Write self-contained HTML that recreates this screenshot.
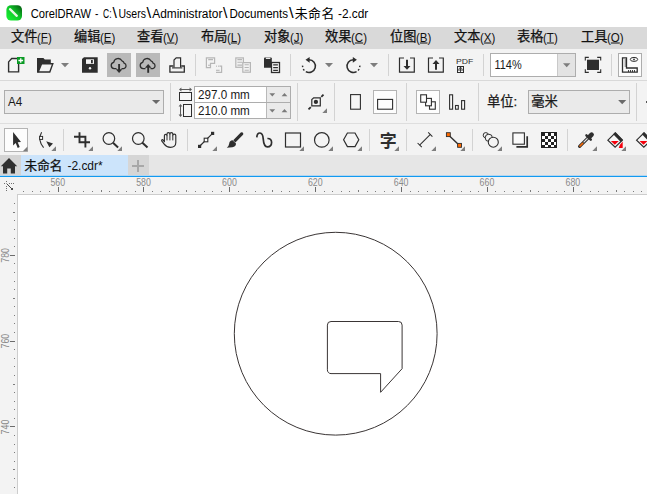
<!DOCTYPE html>
<html><head><meta charset="utf-8"><title>CorelDRAW</title>
<style>
html,body{margin:0;padding:0;}
body{width:647px;height:494px;overflow:hidden;position:relative;background:#fff;font-family:"Liberation Sans","Noto Sans CJK SC",sans-serif;color:#111;}
.abs{position:absolute;}
#title{left:0;top:0;width:647px;height:27px;background:#fff;}
#menu{left:0;top:27px;width:647px;height:22px;background:#d9d9d9;}
#menu span{-webkit-text-stroke:0.25px #111;position:absolute;top:-1px;font-size:13.2px;white-space:nowrap;color:#111;}
#menu span u{font-size:12px;text-decoration:none;display:inline-block;transform:translateY(0.5px) scaleX(0.96);transform-origin:left center;-webkit-text-stroke:0;}
#menu span u b{font-weight:normal;text-decoration:underline;}
#tb1{left:0;top:49px;width:647px;height:31px;background:#f3f3f3;}
#sep1{left:0;top:80px;width:647px;height:1px;background:#d9d9d9;}
#tb2{left:0;top:81px;width:647px;height:43px;background:#f3f3f3;}
#tb3{left:0;top:124px;width:647px;height:31px;background:#f3f3f3;}
#tabs{left:0;top:155px;width:647px;height:21px;background:#e6e6e6;}
#hr{left:0;top:177px;width:647px;height:17px;background:#f3f3f3;}
#vr{left:0;top:194px;width:17px;height:300px;background:#f3f3f3;}
#canvas{left:17px;top:194px;width:630px;height:300px;background:#fff;border-left:1px solid #cdcdcd;border-top:1px solid #cdcdcd;box-sizing:border-box;}
.rl{position:absolute;font-size:9.5px;color:#7d7d7d;}
svg{position:absolute;left:0;top:0;overflow:visible;}
</style></head><body>

<div id="title" class="abs"></div>
<svg width="647" height="494" viewBox="0 0 647 494"><defs><linearGradient id="lg" x1="0" y1="1" x2="1" y2="0"><stop offset="0" stop-color="#1af634"/><stop offset="0.5" stop-color="#0ecb29"/><stop offset="1" stop-color="#05500f"/></linearGradient></defs>
<rect x="6.4" y="5.2" width="15.6" height="15.4" rx="4.6" ry="4.6" fill="url(#lg)"/>
<path d="M10 9.2 L16.8 15.8" stroke="#e6f6e2" stroke-width="2.3" stroke-linecap="round"/>
<text y="17.8" font-size="12.5" fill="#000" font-family="Liberation Sans, Noto Sans CJK SC, sans-serif"><tspan x="30.8" textLength="60.3" lengthAdjust="spacingAndGlyphs">CorelDRAW</tspan> <tspan x="94.9" textLength="3.4" lengthAdjust="spacingAndGlyphs">-</tspan> <tspan x="103" textLength="8.5" lengthAdjust="spacingAndGlyphs">C:</tspan><tspan x="112.4" font-size="14" textLength="4.4" lengthAdjust="spacingAndGlyphs">\</tspan><tspan x="118.5" textLength="27.4" lengthAdjust="spacingAndGlyphs">Users</tspan><tspan x="146.5" font-size="14" textLength="4.7" lengthAdjust="spacingAndGlyphs">\</tspan><tspan x="152.2" textLength="70.2" lengthAdjust="spacingAndGlyphs">Administrator</tspan><tspan x="223" font-size="14" textLength="4.4" lengthAdjust="spacingAndGlyphs">\</tspan><tspan x="229.4" textLength="58.7" lengthAdjust="spacingAndGlyphs">Documents</tspan><tspan x="289" font-size="14" textLength="4.6000000000000005" lengthAdjust="spacingAndGlyphs">\</tspan><tspan x="294.7" y="17.5" font-size="12.9" letter-spacing="0.5">未命名</tspan> <tspan x="338" y="17.8" textLength="30.3" lengthAdjust="spacingAndGlyphs">-2.cdr</tspan></text></svg>
<div id="menu" class="abs">
<span style="left:11px">文件<u>(<b>F</b>)</u></span>
<span style="left:74px">编辑<u>(<b>E</b>)</u></span>
<span style="left:137px">查看<u>(<b>V</b>)</u></span>
<span style="left:201px">布局<u>(<b>L</b>)</u></span>
<span style="left:264px">对象<u>(<b>J</b>)</u></span>
<span style="left:325px">效果<u>(<b>C</b>)</u></span>
<span style="left:390px">位图<u>(<b>B</b>)</u></span>
<span style="left:454px">文本<u>(<b>X</b>)</u></span>
<span style="left:517px">表格<u>(<b>T</b>)</u></span>
<span style="left:581px">工具<u>(<b>O</b>)</u></span>
</div>
<div id="tb1" class="abs"></div><div id="sep1" class="abs"></div><div id="tb2" class="abs"></div><div id="tb3" class="abs"></div>
<div id="tabs" class="abs"></div><div id="hr" class="abs"></div><div id="vr" class="abs"></div><div id="canvas" class="abs"></div>
<svg width="647" height="494" viewBox="0 0 647 494"><rect x="195" y="54" width="1" height="22" fill="#d3d3d3"/>
<rect x="290" y="54" width="1" height="22" fill="#d3d3d3"/>
<rect x="388" y="54" width="1" height="22" fill="#d3d3d3"/>
<rect x="483" y="54" width="1" height="22" fill="#d3d3d3"/>
<rect x="611" y="54" width="1" height="22" fill="#d3d3d3"/>
<path d="M11.7 58.5 H18.6 V71.9 H8.6 V61.9 Z" fill="#f6f6f6" stroke="#2e2e2e" stroke-width="1.4" stroke-linejoin="miter"/>
<rect x="17" y="57" width="7.5" height="7" fill="#0a9a24"/>
<path d="M20.75 58.2 V62.8 M18.4 60.5 H23.1" stroke="#fff" stroke-width="1.3" fill="none"/>
<path d="M37 72.4 V58 H43.4 L44.8 59.6 H50.8 V63.6 H41.5 L38.5 72.4 Z" fill="#2e2e2e"/>
<path d="M38.2 72 L41.6 63.7 H52.8 L49.8 72 Z" fill="#f2f2f2" stroke="#2e2e2e" stroke-width="1.4" stroke-linejoin="miter"/>
<path d="M61 63 H69 L65 67.3 Z" fill="#7d7d7d"/>
<path d="M325 63 H333 L329 67.3 Z" fill="#7d7d7d"/>
<path d="M370 63 H378 L374 67.3 Z" fill="#7d7d7d"/>
<path d="M82 59 L84 57.3 H97.7 V72.7 H82 Z" fill="#2e2e2e"/>
<rect x="86" y="59.3" width="8" height="4.6" fill="#f4f4f4"/>
<rect x="91" y="60" width="1.8" height="3.2" fill="#2e2e2e"/>
<circle cx="90" cy="68.3" r="1.2" fill="#f4f4f4"/>
<rect x="107" y="53" width="24" height="24" fill="#b9b9b9"/>
<rect x="136" y="53" width="24" height="24" fill="#b9b9b9"/>
<path d="M116.5 68.6 H114.1 A3.2 3.2 0 0 1 113.7 62.3 A4.4 4.4 0 0 1 121.9 60.8 A3.1 3.1 0 0 1 124.1 63.2 A2.8 2.8 0 0 1 123.9 68.6 H121.5" fill="none" stroke="#2e2e2e" stroke-width="1.3"/>
<path d="M119.1 64 V70" stroke="#2e2e2e" stroke-width="1.9" fill="none"/><path d="M115.8 69.3 H122.4 L119.1 72.9 Z" fill="#2e2e2e"/>
<path d="M145.5 68.6 H143.1 A3.2 3.2 0 0 1 142.7 62.3 A4.4 4.4 0 0 1 150.9 60.8 A3.1 3.1 0 0 1 153.1 63.2 A2.8 2.8 0 0 1 152.9 68.6 H150.5" fill="none" stroke="#2e2e2e" stroke-width="1.3"/>
<path d="M148.2 67 V72.8" stroke="#2e2e2e" stroke-width="1.9" fill="none"/><path d="M144.9 67.8 H151.5 L148.2 64 Z" fill="#2e2e2e"/>
<path d="M173.4 66 H169.9 V72.1 H184.3 V66 H181.2" fill="none" stroke="#2e2e2e" stroke-width="1.3"/>
<path d="M174 67.6 V60 L176.2 57.8 H180.6 V67.6" fill="none" stroke="#2e2e2e" stroke-width="1.2"/>
<path d="M172 67.9 H182.4" stroke="#2e2e2e" stroke-width="1.1"/>
<path d="M206.4 57.9 H214.6 V63.4 H210.5 V67.6 H206.4 Z" fill="none" stroke="#b6b6b6" stroke-width="1.2"/>
<path d="M208.2 59.6 H213 M208 65.2 H210" stroke="#b6b6b6" stroke-width="1.1"/>
<path d="M219.4 66.2 H221.6 V72.3 H216" fill="none" stroke="#b6b6b6" stroke-width="1.2"/>
<path d="M216 70.3 H219.6" stroke="#b6b6b6" stroke-width="1.1"/>
<rect x="216" y="65.6" width="1" height="1.1" fill="#b6b6b6"/><rect x="218" y="65.6" width="1" height="1.1" fill="#b6b6b6"/>
<rect x="235.8" y="57.9" width="7.6" height="9.4" fill="#f2f2f2" stroke="#b6b6b6" stroke-width="1.2"/>
<path d="M237.4 59.6 H242 M237.4 62.3 H242 M237.4 65.1 H242" stroke="#b6b6b6" stroke-width="1.1"/>
<rect x="242.8" y="62.6" width="7.6" height="9.6" fill="#f2f2f2" stroke="#b6b6b6" stroke-width="1.2"/>
<path d="M244.6 64.8 H248.8 M244.6 67.5 H248.8 M244.6 70.3 H248.8" stroke="#b6b6b6" stroke-width="1.1"/>
<path d="M264 58.3 Q264 57.4 265 57.4 H270.8 Q271.8 57.4 271.8 58.3 V67.8 H264 Z" fill="#2e2e2e"/>
<rect x="265.8" y="57.8" width="4.6" height="1.2" rx="0.5" fill="#e8e8e8"/>
<rect x="271.5" y="62.5" width="8" height="10" fill="#f8f8f8" stroke="#2e2e2e" stroke-width="1.3"/>
<path d="M273.2 64.9 H277.9 M273.2 67.6 H277.9 M273.2 70.3 H277.9" stroke="#2e2e2e" stroke-width="1.2"/>
<path d="M309.00 59.70 A6.4 6.4 0 1 1 305.80 71.64" fill="none" stroke="#2e2e2e" stroke-width="1.5"/>
<path d="M304.32 70.46 A6.4 6.4 0 0 1 303.30 69.01 M302.68 67.10 A6.4 6.4 0 0 1 302.62 65.65" fill="none" stroke="#2e2e2e" stroke-width="1.5"/>
<path d="M309.6 56.9 V62.7 L305.5 59.8 Z" fill="#2e2e2e"/>
<path d="M353.40 59.70 A6.4 6.4 0 1 0 356.60 71.64" fill="none" stroke="#2e2e2e" stroke-width="1.5"/>
<path d="M358.08 70.46 A6.4 6.4 0 0 0 359.10 69.01 M359.72 67.10 A6.4 6.4 0 0 0 359.78 65.65" fill="none" stroke="#2e2e2e" stroke-width="1.5"/>
<path d="M352.79999999999995 56.9 V62.7 L356.9 59.8 Z" fill="#2e2e2e"/>
<path d="M404 58 H399.5 V72.1 H414.3 V58 H410" fill="none" stroke="#2e2e2e" stroke-width="1.2"/>
<path d="M407 59.8 V67" stroke="#2e2e2e" stroke-width="2"/><path d="M403.5 65.9 H410.5 L407 69.8 Z" fill="#2e2e2e"/>
<path d="M433 58 H428.5 V72.1 H443.3 V58 H439" fill="none" stroke="#2e2e2e" stroke-width="1.2"/>
<path d="M436 63 V69.8" stroke="#2e2e2e" stroke-width="2"/><path d="M432.5 64 H439.5 L436 60 Z" fill="#2e2e2e"/>
<text x="456" y="63.9" font-size="7.6" fill="#2e2e2e" font-family="Liberation Sans, sans-serif" textLength="17.2" lengthAdjust="spacingAndGlyphs">PDF</text>
<rect x="457.5" y="66.5" width="6" height="6" fill="none" stroke="#2e2e2e" stroke-width="1"/>
<path d="M460.5 66.5 V72.5 M458.6 69 L460.5 67.4 L462.4 69 M457.5 70 H463.5" fill="none" stroke="#2e2e2e" stroke-width="0.9"/>
<rect x="490.5" y="53.5" width="85" height="23" fill="#fff" stroke="#adadad" stroke-width="1"/>
<rect x="557.5" y="54" width="17.5" height="22" fill="#e3e3e3"/><rect x="557" y="54" width="1" height="22" fill="#c9c9c9"/>
<path d="M563 63.3 H570.4 L566.7 67.2 Z" fill="#7d7d7d"/>
<text x="494.5" y="69.3" font-size="12.6" fill="#1a1a1a" font-family="Liberation Sans, sans-serif" textLength="27.2" lengthAdjust="spacingAndGlyphs">114%</text>
<rect x="587" y="59.7" width="12" height="10.3" fill="#2e2e2e"/>
<path d="M585.3 60.5 V57.4 H588.8 M597.2 57.4 H600.7 V60.5 M600.7 69.3 V72.4 H597.2 M588.8 72.4 H585.3 V69.3" fill="none" stroke="#2e2e2e" stroke-width="1.1"/>
<rect x="618.5" y="53.5" width="23" height="23" fill="#fcfcfc" stroke="#adadad" stroke-width="1"/>
<path d="M622.5 57.8 H626.5 V68 H637.2 V72.2 H622.5 Z" fill="none" stroke="#2e2e2e" stroke-width="1.3"/>
<path d="M624.6 60 H626.5 M624.6 62 H626.5 M624.6 64 H626.5 M624.6 66 H626.5 M628.5 70 V72 M630.5 70 V72 M632.5 70 V72 M634.5 70 V72" stroke="#2e2e2e" stroke-width="0.9"/>
<ellipse cx="634" cy="59.4" rx="3.7" ry="2" fill="none" stroke="#2e2e2e" stroke-width="1"/><circle cx="634" cy="59.4" r="0.9" fill="#2e2e2e"/></svg>
<svg width="647" height="494" viewBox="0 0 647 494"><rect x="0" y="123" width="647" height="1" fill="#dedede"/>
<rect x="170" y="83" width="1" height="38" fill="#d3d3d3"/>
<rect x="297" y="83" width="1" height="38" fill="#d3d3d3"/>
<rect x="334" y="83" width="1" height="38" fill="#d3d3d3"/>
<rect x="406" y="83" width="1" height="38" fill="#d3d3d3"/>
<rect x="478" y="83" width="1" height="38" fill="#d3d3d3"/>
<rect x="636" y="83" width="1" height="38" fill="#d3d3d3"/>
<rect x="4.5" y="90.5" width="159" height="23" fill="#eaeaea" stroke="#adadad"/>
<text x="8" y="106" font-size="12.6" fill="#1a1a1a" font-family="Liberation Sans, Noto Sans CJK SC, sans-serif" textLength="14.3" lengthAdjust="spacingAndGlyphs">A4</text>
<path d="M152 100 H160.2 L156.1 104.1 Z" fill="#6a6a6a"/>
<rect x="180" y="89" width="11" height="1" fill="#5a5a5a"/><path d="M179 89.5 L181.4 87.6 V91.4 Z M192 89.5 L189.6 87.6 V91.4 Z" fill="#5a5a5a"/>
<rect x="179.5" y="92.5" width="12" height="8" fill="#f6f6f6" stroke="#2e2e2e" stroke-width="1"/>
<rect x="180" y="105" width="1" height="11" fill="#5a5a5a"/><path d="M180.5 104 L178.6 106.4 H182.4 Z M180.5 117 L178.6 114.6 H182.4 Z" fill="#5a5a5a"/>
<rect x="183.5" y="104.5" width="8" height="12" fill="#f6f6f6" stroke="#2e2e2e" stroke-width="1"/>
<rect x="194.5" y="86.5" width="96" height="16" fill="#fff" stroke="#adadad"/>
<rect x="266.5" y="87.0" width="23.5" height="15" fill="#eaeaea"/><rect x="266" y="87.0" width="1" height="15" fill="#b9b9b9"/>
<path d="M269.4 93.2 H275.2 L272.3 96.4 Z" fill="#7a7a7a"/>
<path d="M281.6 96.2 H287.4 L284.5 93.0 Z" fill="#7a7a7a"/>
<text x="198" y="99.1" font-size="12.5" fill="#1a1a1a" font-family="Liberation Sans, Noto Sans CJK SC, sans-serif" textLength="51.8" lengthAdjust="spacingAndGlyphs">297.0 mm</text>
<rect x="194.5" y="102.5" width="96" height="16" fill="#fff" stroke="#adadad"/>
<rect x="266.5" y="103.0" width="23.5" height="15" fill="#eaeaea"/><rect x="266" y="103.0" width="1" height="15" fill="#b9b9b9"/>
<path d="M269.4 109.2 H275.2 L272.3 112.4 Z" fill="#7a7a7a"/>
<path d="M281.6 112.2 H287.4 L284.5 109.0 Z" fill="#7a7a7a"/>
<text x="198" y="115.1" font-size="12.5" fill="#1a1a1a" font-family="Liberation Sans, Noto Sans CJK SC, sans-serif" textLength="51.8" lengthAdjust="spacingAndGlyphs">210.0 mm</text>
<path d="M313.7 97.8 H320.3 V105.9 H311.8 V99.6 Z" fill="#f6f6f6" stroke="#2e2e2e" stroke-width="1.2"/>
<path d="M321.3 96.8 L323.5 94.6 M310.8 107.1 L308.5 109.4" stroke="#2e2e2e" stroke-width="1.8"/>
<circle cx="315.9" cy="101.9" r="2.15" fill="#2e2e2e"/>
<path d="M327 108.3 V113 H322.3 Z" fill="#7e7e7e"/>
<rect x="350.6" y="94.6" width="9.8" height="14.6" fill="#f6f6f6" stroke="#2e2e2e" stroke-width="1.1"/>
<rect x="373.5" y="90.5" width="23" height="23" fill="#fdfdfd" stroke="#b4b4b4"/>
<rect x="377.6" y="99.4" width="15" height="9.8" fill="#fdfdfd" stroke="#2e2e2e" stroke-width="1.1"/>
<rect x="416.5" y="90.5" width="23" height="23" fill="#fdfdfd" stroke="#b4b4b4"/>
<rect x="429.5" y="101.8" width="5.8" height="7.4" fill="#fdfdfd" stroke="#2e2e2e" stroke-width="1.1"/>
<rect x="425.6" y="98.4" width="5.8" height="7.4" fill="#fdfdfd" stroke="#2e2e2e" stroke-width="1.1"/>
<rect x="420.7" y="94.8" width="5.8" height="7.4" fill="#fdfdfd" stroke="#2e2e2e" stroke-width="1.1"/>
<rect x="449.6" y="94.8" width="3" height="14.4" fill="#f6f6f6" stroke="#2e2e2e" stroke-width="1.1"/>
<rect x="455.5" y="105.5" width="2.8" height="3.7" fill="#f6f6f6" stroke="#2e2e2e" stroke-width="1.1"/>
<rect x="461.6" y="100.6" width="3" height="8.6" fill="#f6f6f6" stroke="#2e2e2e" stroke-width="1.1"/>
<text x="487" y="106.3" font-size="13.3" fill="#1a1a1a" stroke="#1a1a1a" stroke-width="0.25" font-family="Liberation Sans, Noto Sans CJK SC, sans-serif">单位:</text>
<rect x="528.5" y="90.5" width="101" height="23" fill="#eaeaea" stroke="#adadad"/>
<text x="531.3" y="106.3" font-size="13.3" fill="#1a1a1a" stroke="#1a1a1a" stroke-width="0.25" font-family="Liberation Sans, Noto Sans CJK SC, sans-serif">毫米</text>
<path d="M618.1 100.1 H626.3 L622.2 104.2 Z" fill="#6a6a6a"/>
<rect x="646" y="101" width="1" height="2" fill="#555"/>
<rect x="63" y="129" width="1" height="22" fill="#d3d3d3"/>
<rect x="187" y="129" width="1" height="22" fill="#d3d3d3"/>
<rect x="369" y="129" width="1" height="22" fill="#d3d3d3"/>
<rect x="406" y="129" width="1" height="22" fill="#d3d3d3"/>
<rect x="472" y="129" width="1" height="22" fill="#d3d3d3"/>
<rect x="567" y="129" width="1" height="22" fill="#d3d3d3"/>
<rect x="4.5" y="128.5" width="23" height="23" fill="#fdfdfd" stroke="#b4b4b4"/>
<path d="M13.1 131.9 V145.5 L15.7 143.1 L17.7 147.9 L19.7 147.1 L17.7 142.3 L21 141.9 Z" fill="#2e2e2e"/>
<path d="M27.5 146.5 V151.2 H22.8 Z" fill="#7e7e7e"/>
<path d="M41.6 132.3 Q37.2 140 43.6 147.6" fill="none" stroke="#2e2e2e" stroke-width="1.1"/>
<rect x="39.6" y="136.4" width="3" height="3" fill="#fff" stroke="#2e2e2e" stroke-width="1"/>
<path d="M46.2 141.2 L53 143.6 L49.4 147.2 Z" fill="#2e2e2e"/>
<path d="M56 146.3 V151 H51.3 Z" fill="#7e7e7e"/>
<path d="M79.5 132.3 V142.2 H90 M74 136.8 H85.4 V147.6" fill="none" stroke="#2e2e2e" stroke-width="1.9"/>
<path d="M93 146.3 V151 H88.3 Z" fill="#7e7e7e"/>
<circle cx="108.9" cy="138.5" r="5.8" fill="none" stroke="#2e2e2e" stroke-width="1.2"/>
<path d="M113.0 142.8 L118.10000000000001 147.4" stroke="#2e2e2e" stroke-width="2"/>
<path d="M122 146.3 V151 H117.3 Z" fill="#7e7e7e"/>
<circle cx="138.3" cy="138.5" r="5.8" fill="none" stroke="#2e2e2e" stroke-width="1.2"/>
<path d="M142.4 142.8 L147.5 147.4" stroke="#2e2e2e" stroke-width="2"/>
<path d="M164.4 142.2 V135.6 a1.3 1.3 0 0 1 2.6 0 V134 a1.45 1.45 0 0 1 2.9 0 a1.45 1.45 0 0 1 2.9 0 V135.6 a1.5 1.5 0 0 1 3 0 V142.4 Q175.8 147.3 170.4 147.3 Q166.4 147.3 164.2 144.2 L161.7 140.8 Q161.3 139.5 162.7 139.6 L164.4 141.6" fill="none" stroke="#2e2e2e" stroke-width="1.15" stroke-linejoin="round"/>
<path d="M167 135.6 V140.4 M169.9 134 V140.4 M172.8 135.6 V140.4" fill="none" stroke="#2e2e2e" stroke-width="1"/>
<path d="M199.6 146.2 L212.6 133.4" stroke="#2e2e2e" stroke-width="1.2"/>
<rect x="198" y="144.8" width="3.2" height="3.2" fill="#2e2e2e"/><rect x="211" y="131.8" width="3.2" height="3.2" fill="#2e2e2e"/>
<rect x="204.2" y="138.2" width="3.6" height="3.6" fill="#fff" stroke="#2e2e2e" stroke-width="1.1"/>
<path d="M217 146.3 V151 H212.3 Z" fill="#7e7e7e"/>
<path d="M233.2 140.2 L240.8 132.6 Q242.4 131.8 243.2 133.2 Q243.6 134.2 242.8 135 L235.4 142.6 Z" fill="#2e2e2e"/>
<path d="M232.6 140.2 L236 143.6 Q236 146.8 232.4 147.2 Q229.4 147.4 226.8 147.7 Q229 145.8 229.2 143.4 Q229.6 140.4 232.6 140.2 Z" fill="#2e2e2e"/>
<path d="M256.8 137.4 Q257 132.9 260 133 Q262.8 133.3 263.2 138.6 Q263.8 146.8 267.4 146.9 Q271.6 146.8 271.6 142.2 Q271.4 138.2 267.4 138.5" fill="none" stroke="#2e2e2e" stroke-width="1.7"/>
<rect x="285.5" y="133" width="15" height="14" fill="#f4f4f4" stroke="#2e2e2e" stroke-width="1.2"/>
<path d="M304 146.3 V151 H299.3 Z" fill="#7e7e7e"/>
<circle cx="321.8" cy="139.9" r="7.3" fill="#f4f4f4" stroke="#2e2e2e" stroke-width="1.2"/>
<path d="M333 146.3 V151 H328.3 Z" fill="#7e7e7e"/>
<path d="M343.6 139.8 L347.4 133 H355 L358.8 139.8 L355 146.6 H347.4 Z" fill="#f4f4f4" stroke="#2e2e2e" stroke-width="1.2"/>
<path d="M362 146.3 V151 H357.3 Z" fill="#7e7e7e"/>
<text x="379.7" y="147" font-size="17" font-weight="bold" fill="#2e2e2e" font-family="Liberation Sans, Noto Sans CJK SC, sans-serif">字</text>
<path d="M399 146.3 V151 H394.3 Z" fill="#7e7e7e"/>
<path d="M419.6 145.2 L430.4 134.4" stroke="#2e2e2e" stroke-width="1.05"/><path d="M417.6 143 L421.8 147.2 M428.2 132.4 L432.4 136.6" stroke="#2e2e2e" stroke-width="1.05"/>
<path d="M436 146.3 V151 H431.3 Z" fill="#7e7e7e"/>
<path d="M449 135.4 L459 145" stroke="#2e2e2e" stroke-width="1.4"/>
<rect x="446.4" y="132.7" width="3.9" height="3.9" fill="#ff6a00" stroke="#2e2e2e" stroke-width="0.9"/>
<rect x="457.6" y="143.4" width="3.9" height="3.9" fill="#ff6a00" stroke="#2e2e2e" stroke-width="0.9"/>
<path d="M465 146.3 V151 H460.3 Z" fill="#7e7e7e"/>
<circle cx="485.8" cy="135.2" r="2.6" fill="#f4f4f4" stroke="#2e2e2e" stroke-width="1"/>
<circle cx="488.8" cy="137.8" r="3.6" fill="#f4f4f4" stroke="#2e2e2e" stroke-width="1"/>
<circle cx="493.3" cy="142.2" r="5" fill="#f4f4f4" stroke="#2e2e2e" stroke-width="1.1"/>
<path d="M502 146.3 V151 H497.3 Z" fill="#7e7e7e"/>
<path d="M516.4 146.9 H527.2 V136.2" fill="none" stroke="#2e2e2e" stroke-width="1.7"/>
<rect x="512.9" y="132.9" width="11.5" height="11.3" fill="#fafafa" stroke="#2e2e2e" stroke-width="1.1"/>
<rect x="540.5" y="131.5" width="17" height="17" fill="#f8f8f8"/>
<rect x="541.5" y="132.5" width="15" height="15" fill="#fff" stroke="#222" stroke-width="1"/>
<rect x="542" y="133" width="3" height="3" fill="#222"/>
<rect x="542" y="139" width="3" height="3" fill="#222"/>
<rect x="542" y="145" width="3" height="2" fill="#222"/>
<rect x="545" y="136" width="3" height="3" fill="#222"/>
<rect x="545" y="142" width="3" height="3" fill="#222"/>
<rect x="548" y="133" width="3" height="3" fill="#222"/>
<rect x="548" y="139" width="3" height="3" fill="#222"/>
<rect x="548" y="145" width="3" height="2" fill="#222"/>
<rect x="551" y="136" width="3" height="3" fill="#222"/>
<rect x="551" y="142" width="3" height="3" fill="#222"/>
<rect x="554" y="133" width="2" height="3" fill="#222"/>
<rect x="554" y="139" width="2" height="3" fill="#222"/>
<rect x="554" y="145" width="2" height="2" fill="#222"/>
<path d="M579.6 146.4 L588.4 137.6" stroke="#2e2e2e" stroke-width="3.2" stroke-linecap="round"/>
<path d="M580 146 L582.6 143.4" stroke="#f26a0a" stroke-width="1.7" stroke-linecap="round"/>
<path d="M583.6 142.4 L587.8 138.2" stroke="#e8e8e8" stroke-width="1.2"/>
<path d="M586.4 135.3 L590.8 139.7" stroke="#2e2e2e" stroke-width="2.4" stroke-linecap="round"/>
<path d="M589.4 136.8 L591.6 134.6" stroke="#2e2e2e" stroke-width="4.6" stroke-linecap="round"/>
<path d="M597 146.3 V151 H592.3 Z" fill="#7e7e7e"/>
<path d="M615.1 133 L622.3000000000001 140.2 L615.1 147.2 L607.9 140.2 Z" fill="#f8f8f8" stroke="#2e2e2e" stroke-width="1.2"/>
<path d="M610.8000000000001 141 H618.8000000000001 L614.8000000000001 144.8 Z" fill="#f5000c"/>
<path d="M615.4 132 L623.0 139.8 L620.8000000000001 142 L613.2 134.3 Z" fill="#2e2e2e"/>
<path d="M622.7 141.4 V148 H618.7 Q619.1 145 622.7 141.4 Z" fill="#f5000c"/>
<path d="M626 146.3 V151 H621.3 Z" fill="#7e7e7e"/>
<path d="M643.8 133 L651.0 140.2 L643.8 147.2 L636.5999999999999 140.2 Z" fill="#f8f8f8" stroke="#2e2e2e" stroke-width="1.2"/>
<path d="M639.5 141 H647.5 L643.5 144.8 Z" fill="#f5000c"/>
<path d="M644.0999999999999 132 L651.6999999999999 139.8 L649.5 142 L641.9 134.3 Z" fill="#2e2e2e"/>
<rect x="0" y="155" width="21" height="21" fill="#d4d4d4"/>
<rect x="21" y="155" width="107" height="21" fill="#cce4fb"/>
<rect x="128" y="155" width="21" height="21" fill="#d6d6d6"/>
<rect x="0" y="175" width="647" height="1" fill="#b4d6f0"/><rect x="0" y="176" width="647" height="1" fill="#129af0"/>
<path d="M9 158 L17.2 166.2 H15 V173.6 H10.8 V168.6 H7.2 V173.6 H3 V166.2 H0.8 Z" fill="#2f2f2f"/>
<text x="24.6" y="169.8" font-size="12.6" fill="#111" stroke="#111" stroke-width="0.25" font-family="Liberation Sans, Noto Sans CJK SC, sans-serif">未命名</text>
<text x="67.4" y="170" font-size="13" fill="#111" font-family="Liberation Sans, Noto Sans CJK SC, sans-serif" textLength="35.3" lengthAdjust="spacingAndGlyphs">-2.cdr*</text>
<path d="M138 160 V172 M132 166 H144" stroke="#a8a8a8" stroke-width="2"/>
<rect x="6" y="181" width="1" height="1" fill="#707070"/>
<rect x="4" y="183" width="1" height="1" fill="#707070"/>
<rect x="9" y="183" width="1" height="1" fill="#707070"/>
<rect x="11" y="183" width="1" height="1" fill="#707070"/>
<rect x="13" y="183" width="1" height="1" fill="#707070"/>
<rect x="6" y="186" width="1" height="1" fill="#707070"/>
<rect x="6" y="188" width="1" height="1" fill="#707070"/>
<rect x="6" y="190" width="1" height="1" fill="#707070"/>
<rect x="6" y="183" width="1" height="1" fill="#a0a0a0"/>
<rect x="7" y="184" width="1" height="1" fill="#4a4a4a"/>
<rect x="8" y="185" width="1" height="1" fill="#4a4a4a"/>
<rect x="9" y="186" width="1" height="1" fill="#4a4a4a"/>
<rect x="10" y="187" width="1" height="1" fill="#4a4a4a"/>
<rect x="11" y="188" width="2" height="2" fill="#4a4a4a"/></svg>
<svg width="647" height="494" viewBox="0 0 647 494">
<rect x="23" y="191" width="1" height="1" fill="#7c7c7c"/>
<rect x="32" y="191" width="1" height="1" fill="#7c7c7c"/>
<rect x="40" y="191" width="1" height="1" fill="#7c7c7c"/>
<rect x="49" y="191" width="1" height="1" fill="#7c7c7c"/>
<rect x="58" y="187" width="1" height="5" fill="#6c6c6c"/>
<rect x="66" y="191" width="1" height="1" fill="#7c7c7c"/>
<rect x="75" y="191" width="1" height="1" fill="#7c7c7c"/>
<rect x="83" y="191" width="1" height="1" fill="#7c7c7c"/>
<rect x="92" y="191" width="1" height="1" fill="#7c7c7c"/>
<rect x="101" y="190" width="1" height="2" fill="#7c7c7c"/>
<rect x="109" y="191" width="1" height="1" fill="#7c7c7c"/>
<rect x="118" y="191" width="1" height="1" fill="#7c7c7c"/>
<rect x="126" y="191" width="1" height="1" fill="#7c7c7c"/>
<rect x="135" y="191" width="1" height="1" fill="#7c7c7c"/>
<rect x="143" y="187" width="1" height="5" fill="#6c6c6c"/>
<rect x="152" y="191" width="1" height="1" fill="#7c7c7c"/>
<rect x="161" y="191" width="1" height="1" fill="#7c7c7c"/>
<rect x="169" y="191" width="1" height="1" fill="#7c7c7c"/>
<rect x="178" y="191" width="1" height="1" fill="#7c7c7c"/>
<rect x="186" y="190" width="1" height="2" fill="#7c7c7c"/>
<rect x="195" y="191" width="1" height="1" fill="#7c7c7c"/>
<rect x="204" y="191" width="1" height="1" fill="#7c7c7c"/>
<rect x="212" y="191" width="1" height="1" fill="#7c7c7c"/>
<rect x="221" y="191" width="1" height="1" fill="#7c7c7c"/>
<rect x="229" y="187" width="1" height="5" fill="#6c6c6c"/>
<rect x="238" y="191" width="1" height="1" fill="#7c7c7c"/>
<rect x="246" y="191" width="1" height="1" fill="#7c7c7c"/>
<rect x="255" y="191" width="1" height="1" fill="#7c7c7c"/>
<rect x="264" y="191" width="1" height="1" fill="#7c7c7c"/>
<rect x="272" y="190" width="1" height="2" fill="#7c7c7c"/>
<rect x="281" y="191" width="1" height="1" fill="#7c7c7c"/>
<rect x="289" y="191" width="1" height="1" fill="#7c7c7c"/>
<rect x="298" y="191" width="1" height="1" fill="#7c7c7c"/>
<rect x="307" y="191" width="1" height="1" fill="#7c7c7c"/>
<rect x="315" y="187" width="1" height="5" fill="#6c6c6c"/>
<rect x="324" y="191" width="1" height="1" fill="#7c7c7c"/>
<rect x="332" y="191" width="1" height="1" fill="#7c7c7c"/>
<rect x="341" y="191" width="1" height="1" fill="#7c7c7c"/>
<rect x="349" y="191" width="1" height="1" fill="#7c7c7c"/>
<rect x="358" y="190" width="1" height="2" fill="#7c7c7c"/>
<rect x="367" y="191" width="1" height="1" fill="#7c7c7c"/>
<rect x="375" y="191" width="1" height="1" fill="#7c7c7c"/>
<rect x="384" y="191" width="1" height="1" fill="#7c7c7c"/>
<rect x="392" y="191" width="1" height="1" fill="#7c7c7c"/>
<rect x="401" y="187" width="1" height="5" fill="#6c6c6c"/>
<rect x="410" y="191" width="1" height="1" fill="#7c7c7c"/>
<rect x="418" y="191" width="1" height="1" fill="#7c7c7c"/>
<rect x="427" y="191" width="1" height="1" fill="#7c7c7c"/>
<rect x="435" y="191" width="1" height="1" fill="#7c7c7c"/>
<rect x="444" y="190" width="1" height="2" fill="#7c7c7c"/>
<rect x="452" y="191" width="1" height="1" fill="#7c7c7c"/>
<rect x="461" y="191" width="1" height="1" fill="#7c7c7c"/>
<rect x="470" y="191" width="1" height="1" fill="#7c7c7c"/>
<rect x="478" y="191" width="1" height="1" fill="#7c7c7c"/>
<rect x="487" y="187" width="1" height="5" fill="#6c6c6c"/>
<rect x="495" y="191" width="1" height="1" fill="#7c7c7c"/>
<rect x="504" y="191" width="1" height="1" fill="#7c7c7c"/>
<rect x="513" y="191" width="1" height="1" fill="#7c7c7c"/>
<rect x="521" y="191" width="1" height="1" fill="#7c7c7c"/>
<rect x="530" y="190" width="1" height="2" fill="#7c7c7c"/>
<rect x="538" y="191" width="1" height="1" fill="#7c7c7c"/>
<rect x="547" y="191" width="1" height="1" fill="#7c7c7c"/>
<rect x="556" y="191" width="1" height="1" fill="#7c7c7c"/>
<rect x="564" y="191" width="1" height="1" fill="#7c7c7c"/>
<rect x="573" y="187" width="1" height="5" fill="#6c6c6c"/>
<rect x="581" y="191" width="1" height="1" fill="#7c7c7c"/>
<rect x="590" y="191" width="1" height="1" fill="#7c7c7c"/>
<rect x="598" y="191" width="1" height="1" fill="#7c7c7c"/>
<rect x="607" y="191" width="1" height="1" fill="#7c7c7c"/>
<rect x="616" y="190" width="1" height="2" fill="#7c7c7c"/>
<rect x="624" y="191" width="1" height="1" fill="#7c7c7c"/>
<rect x="633" y="191" width="1" height="1" fill="#7c7c7c"/>
<rect x="641" y="191" width="1" height="1" fill="#7c7c7c"/>
<rect x="650" y="191" width="1" height="1" fill="#7c7c7c"/>
<rect x="14" y="203" width="1" height="1" fill="#7c7c7c"/>
<rect x="13" y="212" width="2" height="1" fill="#7c7c7c"/>
<rect x="14" y="220" width="1" height="1" fill="#7c7c7c"/>
<rect x="14" y="229" width="1" height="1" fill="#7c7c7c"/>
<rect x="14" y="238" width="1" height="1" fill="#7c7c7c"/>
<rect x="14" y="246" width="1" height="1" fill="#7c7c7c"/>
<rect x="10" y="255" width="5" height="1" fill="#6c6c6c"/>
<rect x="14" y="263" width="1" height="1" fill="#7c7c7c"/>
<rect x="14" y="272" width="1" height="1" fill="#7c7c7c"/>
<rect x="14" y="281" width="1" height="1" fill="#7c7c7c"/>
<rect x="14" y="289" width="1" height="1" fill="#7c7c7c"/>
<rect x="13" y="298" width="2" height="1" fill="#7c7c7c"/>
<rect x="14" y="306" width="1" height="1" fill="#7c7c7c"/>
<rect x="14" y="315" width="1" height="1" fill="#7c7c7c"/>
<rect x="14" y="323" width="1" height="1" fill="#7c7c7c"/>
<rect x="14" y="332" width="1" height="1" fill="#7c7c7c"/>
<rect x="10" y="341" width="5" height="1" fill="#6c6c6c"/>
<rect x="14" y="349" width="1" height="1" fill="#7c7c7c"/>
<rect x="14" y="358" width="1" height="1" fill="#7c7c7c"/>
<rect x="14" y="366" width="1" height="1" fill="#7c7c7c"/>
<rect x="14" y="375" width="1" height="1" fill="#7c7c7c"/>
<rect x="13" y="384" width="2" height="1" fill="#7c7c7c"/>
<rect x="14" y="392" width="1" height="1" fill="#7c7c7c"/>
<rect x="14" y="401" width="1" height="1" fill="#7c7c7c"/>
<rect x="14" y="409" width="1" height="1" fill="#7c7c7c"/>
<rect x="14" y="418" width="1" height="1" fill="#7c7c7c"/>
<rect x="10" y="426" width="5" height="1" fill="#6c6c6c"/>
<rect x="14" y="435" width="1" height="1" fill="#7c7c7c"/>
<rect x="14" y="444" width="1" height="1" fill="#7c7c7c"/>
<rect x="14" y="452" width="1" height="1" fill="#7c7c7c"/>
<rect x="14" y="461" width="1" height="1" fill="#7c7c7c"/>
<rect x="13" y="469" width="2" height="1" fill="#7c7c7c"/>
<rect x="14" y="478" width="1" height="1" fill="#7c7c7c"/>
<rect x="14" y="487" width="1" height="1" fill="#7c7c7c"/>
<rect x="14" y="495" width="1" height="1" fill="#7c7c7c"/>
<text x="50.4" y="185.9" font-size="10.4" fill="#8a8a8a" textLength="14.7" lengthAdjust="spacingAndGlyphs" font-family="Liberation Sans, sans-serif">560</text>
<text x="136.2" y="185.9" font-size="10.4" fill="#8a8a8a" textLength="14.7" lengthAdjust="spacingAndGlyphs" font-family="Liberation Sans, sans-serif">580</text>
<text x="222.1" y="185.9" font-size="10.4" fill="#8a8a8a" textLength="14.7" lengthAdjust="spacingAndGlyphs" font-family="Liberation Sans, sans-serif">600</text>
<text x="307.9" y="185.9" font-size="10.4" fill="#8a8a8a" textLength="14.7" lengthAdjust="spacingAndGlyphs" font-family="Liberation Sans, sans-serif">620</text>
<text x="393.8" y="185.9" font-size="10.4" fill="#8a8a8a" textLength="14.7" lengthAdjust="spacingAndGlyphs" font-family="Liberation Sans, sans-serif">640</text>
<text x="479.6" y="185.9" font-size="10.4" fill="#8a8a8a" textLength="14.7" lengthAdjust="spacingAndGlyphs" font-family="Liberation Sans, sans-serif">660</text>
<text x="565.5" y="185.9" font-size="10.4" fill="#8a8a8a" textLength="14.7" lengthAdjust="spacingAndGlyphs" font-family="Liberation Sans, sans-serif">680</text>
<text transform="translate(8.9,262.7) rotate(-90)" font-size="10.4" fill="#8a8a8a" textLength="14.7" lengthAdjust="spacingAndGlyphs" font-family="Liberation Sans, sans-serif">780</text>
<text transform="translate(8.9,348.5) rotate(-90)" font-size="10.4" fill="#8a8a8a" textLength="14.7" lengthAdjust="spacingAndGlyphs" font-family="Liberation Sans, sans-serif">760</text>
<text transform="translate(8.9,434.4) rotate(-90)" font-size="10.4" fill="#8a8a8a" textLength="14.7" lengthAdjust="spacingAndGlyphs" font-family="Liberation Sans, sans-serif">740</text>
<circle cx="335.7" cy="333.7" r="101.4" fill="none" stroke="#3a3535" stroke-width="1"/>
<path d="M331 321.5 H398.5 A3.6 3.6 0 0 1 402.1 325.1 V368.7 L380.6 392.3 V373.6 H331 A3.6 3.6 0 0 1 327.4 369.8 V325.1 A3.6 3.6 0 0 1 331 321.5 Z" fill="none" stroke="#3a3535" stroke-width="1"/>
</svg>
</body></html>
